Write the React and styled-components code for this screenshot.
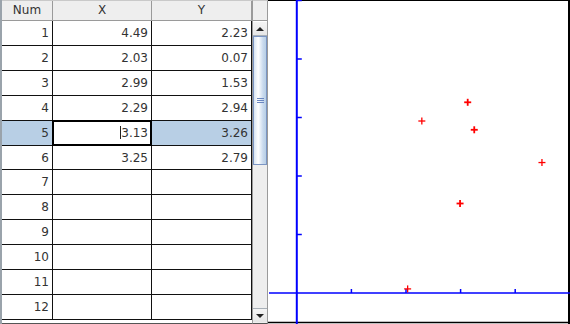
import React from "react";
import styled, { createGlobalStyle } from "styled-components";

const GlobalStyle = createGlobalStyle`
  html, body { margin: 0; padding: 0; background: #fff; overflow: hidden; }
  body { font-family: "DejaVu Sans", "Liberation Sans", sans-serif; font-size: 12px; color: #333; }
`;

const Frame = styled.div`
  display: flex;
  width: 570px;
  height: 324px;
  overflow: hidden;
  background: #fff;
`;

const TablePane = styled.div`
  display: flex;
  width: 268px;
  height: 324px;
  flex: none;
`;

const TableCol = styled.div`
  width: 250px;
  border-left: 2px solid #9aa3ab;
  display: flex;
  flex-direction: column;
`;

const HeaderRow = styled.div`
  display: grid;
  grid-template-columns: 51px 99px 100px;
  height: 21px;
  box-sizing: border-box;
  border-top: 1px solid #c9c9c9;
  border-bottom: 1px solid #9a9a9a;
  background: #eeeeee;
`;

const HeaderCell = styled.div`
  display: flex;
  align-items: center;
  justify-content: center;
  border-right: 1px solid #9a9a9a;
  color: #333;
  line-height: 1;
`;

const Row = styled.div`
  display: grid;
  grid-template-columns: 51px 99px 100px;
  height: 25px;
  box-sizing: border-box;
  border-bottom: 1px solid #111;
  background: ${(p) => (p.$selected ? "#b8cfe5" : "#fff")};
`;

const Cell = styled.div`
  display: flex;
  align-items: center;
  justify-content: flex-end;
  padding-right: 3px;
  border-right: 1px solid #111;
  color: #333;
  white-space: nowrap;
`;

const EditorCell = styled.div`
  display: flex;
  align-items: center;
  justify-content: flex-end;
  padding-right: 2px;
  margin: -1px 0 -1px -1px;
  border: 2px solid #000;
  background: #fff;
  color: #333;
`;

const Caret = styled.span`
  display: inline-block;
  width: 0;
  height: 13px;
  border-left: 1px solid #222;
`;

const TableBottom = styled.div`
  height: 2px;
  border-top: 1px solid #fff;
  border-bottom: 1px solid #555;
`;

const ScrollCol = styled.div`
  width: 16px;
  display: flex;
  flex-direction: column;
`;

const Corner = styled.div`
  height: 21px;
  box-sizing: border-box;
  background: #eeeeee;
  border-top: 1px solid #c9c9c9;
  border-left: 1px solid #9a9a9a;
  border-right: 1px solid #9a9a9a;
  border-bottom: 1px solid #9a9a9a;
`;

const Track = styled.div`
  flex: 1;
  display: flex;
  flex-direction: column;
  background: #eeeeee;
  border-left: 1px solid #9a9a9a;
  border-right: 1px solid #9a9a9a;
  border-bottom: 1px solid #555;
`;

const ArrowButton = styled.div`
  height: 15px;
  box-sizing: border-box;
  display: flex;
  align-items: center;
  justify-content: center;
  background: linear-gradient(to bottom, #f4f4f4, #e6e6e6);
  border-top: ${(p) => (p.$down ? "1px solid #a8b0b8" : "1px solid #fff")};
  border-bottom: ${(p) => (p.$down ? "1px solid #eee" : "1px solid #a8b0b8")};
`;

const Triangle = styled.div`
  width: 0;
  height: 0;
  border-left: 4px solid transparent;
  border-right: 4px solid transparent;
  ${(p) =>
    p.$down
      ? "border-top: 4px solid #222;"
      : "border-bottom: 4px solid #222;"}
`;

const Thumb = styled.div`
  height: 129px;
  box-sizing: border-box;
  border: 1px solid #7b95c3;
  background: linear-gradient(to right, #d7e4f2 0%, #ffffff 35%, #c9daee 75%, #b8cfe5 100%);
  display: flex;
  flex-direction: column;
  align-items: center;
  justify-content: center;
  gap: 1px;
`;

const Grip = styled.div`
  width: 7px;
  height: 1px;
  background: #6a86c0;
`;

const Spacer = styled.div`
  flex: 1;
`;

const PlotPane = styled.div`
  flex: 1;
  height: 324px;
  background: #fff;
`;

const rows = [
  [1, "4.49", "2.23"],
  [2, "2.03", "0.07"],
  [3, "2.99", "1.53"],
  [4, "2.29", "2.94"],
  [5, "3.13", "3.26"],
  [6, "3.25", "2.79"],
  [7, "", ""],
  [8, "", ""],
  [9, "", ""],
  [10, "", ""],
  [11, "", ""],
  [12, "", ""],
];

const points = [
  { x: 4.49, y: 2.23, w: 1.3 },
  { x: 2.03, y: 0.07, w: 1.3 },
  { x: 2.99, y: 1.53, w: 1.8 },
  { x: 2.29, y: 2.94, w: 1.3 },
  { x: 3.13, y: 3.26, w: 1.8 },
  { x: 3.25, y: 2.79, w: 1.8 },
];

function Plot() {
  const W = 302;
  const H = 324;
  const ox = 28.8;
  const oy = 293;
  const sx = 54.6;
  const sy = 58.5;
  const xTicks = [1, 2, 3, 4];
  const yTicks = [1, 2, 3, 4, 5];
  return (
    <svg width={W} height={H} viewBox={`0 0 ${W} ${H}`} style={{ display: "block" }}>
      <line x1="0" y1="0.5" x2={W} y2="0.5" stroke="#000" strokeWidth="1" />
      <line x1={W - 1} y1="0" x2={W - 1} y2={H} stroke="#000" strokeWidth="2" />
      <line x1="0" y1="322.5" x2={W} y2="322.5" stroke="#000" strokeWidth="1.5" />
      <line x1={ox} y1="0" x2={ox} y2={H} stroke="#0000ff" strokeWidth="2" />
      <line x1="1" y1={oy} x2={W} y2={oy} stroke="#0000ff" strokeWidth="1.6" />
      {yTicks.map((t) => (
        <line key={"y" + t} x1={ox} y1={oy - t * sy} x2={ox + 5} y2={oy - t * sy} stroke="#0000ff" strokeWidth="1.5" />
      ))}
      {xTicks.map((t) => (
        <line key={"x" + t} x1={ox + t * sx} y1={oy} x2={ox + t * sx} y2={oy - 4} stroke="#0000ff" strokeWidth="1.5" />
      ))}
      {points.map((p, i) => {
        const cx = ox + p.x * sx;
        const cy = oy - p.y * sy;
        return (
          <g key={i} stroke="#ff0000" strokeWidth={p.w}>
            <line x1={cx - 3.5} y1={cy} x2={cx + 3.5} y2={cy} />
            <line x1={cx} y1={cy - 3.5} x2={cx} y2={cy + 3.5} />
          </g>
        );
      })}
    </svg>
  );
}

export default function App() {
  return (
    <Frame>
      <GlobalStyle />
      <TablePane>
        <TableCol>
          <HeaderRow>
            <HeaderCell>Num</HeaderCell>
            <HeaderCell>X</HeaderCell>
            <HeaderCell>Y</HeaderCell>
          </HeaderRow>
          {rows.map(([n, x, y]) => {
            const selected = n === 5;
            return (
              <Row key={n} $selected={selected}>
                <Cell>{n}</Cell>
                {selected ? (
                  <EditorCell>
                    <Caret />
                    {x}
                  </EditorCell>
                ) : (
                  <Cell>{x}</Cell>
                )}
                <Cell>{y}</Cell>
              </Row>
            );
          })}
          <TableBottom />
        </TableCol>
        <ScrollCol>
          <Corner />
          <Track>
            <ArrowButton>
              <Triangle />
            </ArrowButton>
            <Thumb>
              <Grip />
              <Grip />
              <Grip />
            </Thumb>
            <Spacer />
            <ArrowButton $down>
              <Triangle $down />
            </ArrowButton>
          </Track>
        </ScrollCol>
      </TablePane>
      <PlotPane>
        <Plot />
      </PlotPane>
    </Frame>
  );
}
